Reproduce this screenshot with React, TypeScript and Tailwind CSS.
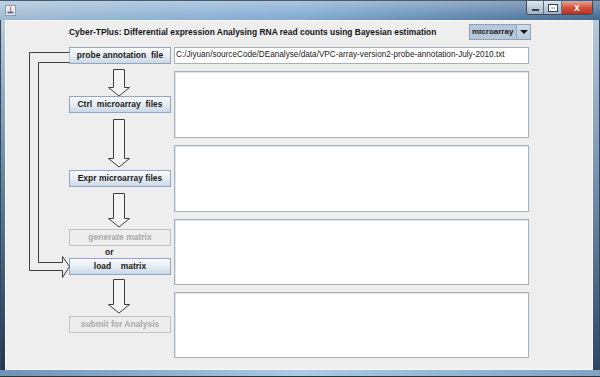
import React from "react";

const font = { fontFamily: '"Liberation Sans", Arial, sans-serif' };

// hollow down arrow between two buttons
const DownArrow = ({ h, start, tip }: { h: number; start: number; tip: number }) => {
  const base = tip - 9;
  return (
    <svg width={102} height={h} className="block">
      <polygon
        points={`44.5,${start + 0.5} 55.5,${start + 0.5} 55.5,${base + 0.5} 60.5,${base + 0.5} 50,${tip} 39.5,${base + 0.5} 44.5,${base + 0.5}`}
        fill="#f4f4f4"
        stroke="#3e3e3e"
        strokeWidth={1}
      />
    </svg>
  );
};

const Btn = ({ label, disabled }: { label: string; disabled?: boolean }) => (
  <div
    className={
      disabled
        ? "h-[17px] w-[102px] border border-[#c2c2c2] bg-[#ededed] flex items-center justify-center text-[8.5px] font-bold text-[#a9a9a9] whitespace-pre"
        : "h-[17px] w-[102px] border border-[#94a6bc] bg-gradient-to-b from-[#f7f9fb] via-[#e6edf4] to-[#c9d8e8] flex items-center justify-center text-[8.5px] font-bold text-[#1a1a1a] whitespace-pre shadow-[inset_0_1px_0_#ffffff]"
    }
  >
    {label}
  </div>
);

const Area = ({ h }: { h: number }) => (
  <div
    className="w-[355px] border border-[#a8b1bb] bg-white shadow-[inset_1px_1px_0_#e2e6ea]"
    style={{ height: h }}
  />
);

export default function App() {
  return (
    <div className="w-[600px] h-[377px] overflow-hidden bg-[#2c4866] flex flex-col" style={font}>
      {/* title bar */}
      <div className="h-[20px] relative bg-gradient-to-r from-[#9fbad3] via-[#7ea9d2] to-[#3f6890] border-t border-[#4a5b6c]">
        <div className="absolute inset-0 bg-gradient-to-b from-[#ffffff55] to-transparent" />
        <svg width={11} height={11} className="absolute left-[5px] top-[4px]" viewBox="0 0 11 11">
          <rect x={0.5} y={0.5} width={10} height={10} fill="#e9eef3" stroke="#8e9aa6" />
          <path d="M5 2 C7 3 4 4 6 6" stroke="#e2681c" strokeWidth={1.2} fill="none" />
          <path d="M2.5 6.5 h6 v2 h-6 z" fill="#3d6fb0" />
        </svg>
        {/* window buttons */}
        <div className="absolute right-[7px] top-0 h-[14px] flex border border-t-0 border-[#3d4c5c] rounded-b-[3px] overflow-hidden">
          <div className="w-[17px] h-full bg-gradient-to-b from-[#dfe7ef] to-[#9fb2c6] border-r border-[#5d6f82] flex items-center justify-center">
            <div className="w-[7px] h-[2px] bg-white border border-[#33404d] mt-[4px]" />
          </div>
          <div className="w-[18px] h-full bg-gradient-to-b from-[#dfe7ef] to-[#9fb2c6] border-r border-[#5d6f82] flex items-center justify-center">
            <div className="w-[8px] h-[6px] border-2 border-white outline outline-1 outline-[#33404d]" />
          </div>
          <div className="w-[30px] h-full bg-gradient-to-b from-[#e9a395] via-[#d2533f] to-[#b9311e] flex items-center justify-center text-white text-[10px] font-bold leading-none">
            x
          </div>
        </div>
      </div>

      <div className="flex flex-1">
        <div className="w-[5px] bg-gradient-to-b from-[#b7cbde] via-[#5d7d9c] to-[#22374f] border-l border-[#3a4756]" />

        {/* content pane */}
        <div className="relative w-[588px] h-[350px] bg-[#eeeeee] border border-[#f9f9f9]">
          <div className="h-[22px] flex items-center pl-[63px]">
            <div className="w-[400px] text-[8.45px] font-bold text-[#141414]">
              Cyber-TPlus: Differential expression Analysing RNA read counts using Bayesian estimation
            </div>
            <div className="w-[62px] h-[16px] flex border border-[#8fa2b8] bg-[#b7c8da]">
              <div className="flex-1 flex items-center pl-[2px] text-[8px] font-bold text-[#1a1a1a]">microarray</div>
              <div className="w-[14px] border-l border-[#93a6bb] flex items-center justify-center bg-gradient-to-b from-[#d2dde8] to-[#b7c8da]">
                <div className="w-0 h-0 border-l-[4px] border-r-[4px] border-t-[4px] border-l-transparent border-r-transparent border-t-[#111]" />
              </div>
            </div>
          </div>

          <div className="mt-[4px] flex pl-[63px] gap-[3px]">
            {/* step column */}
            <div className="w-[102px] flex flex-col">
              <Btn label="probe annotation  file" />
              <DownArrow h={32} start={5} tip={32} />
              <Btn label="Ctrl  microarray  files" />
              <DownArrow h={57} start={6} tip={54} />
              <Btn label="Expr microarray files" />
              <DownArrow h={42} start={6} tip={40} />
              <Btn label="generate matrix" disabled />
              <div className="h-[12px] pl-[36px] text-[8.5px] font-bold text-[#1a1a1a] leading-[12px]">or</div>
              <Btn label="load    matrix" />
              <DownArrow h={41} start={4} tip={38} />
              <Btn label="submit for Analysis" disabled />
            </div>

            {/* inputs column */}
            <div className="flex flex-col gap-[7px]">
              <div className="w-[355px] h-[17px] border border-[#a8b1bb] bg-white flex items-center pl-[1px] text-[8.2px] text-[#222] whitespace-nowrap overflow-hidden">
                C:/Jiyuan/sourceCode/DEanalyse/data/VPC-array-version2-probe-annotation-July-2010.txt
              </div>
              <Area h={67} />
              <Area h={67} />
              <Area h={66} />
              <Area h={66} />
            </div>
          </div>

          {/* connector from probe annotation to load matrix */}
          <svg width={80} height={270} className="absolute left-0 top-0 pointer-events-none">
            <polyline
              points="63.5,31.5 23.5,31.5 23.5,249.5 56.5,249.5 56.5,256.5 63.5,245.5 56.5,235.5 56.5,241.5 32.5,241.5 32.5,41.5 63.5,41.5"
              fill="#eeeeee"
              stroke="#3e3e3e"
              strokeWidth={1}
            />
          </svg>
        </div>

        <div className="w-[7px] bg-gradient-to-b from-[#b7cbde] via-[#6d8cab] to-[#2c4866] border-r border-[#3a4756]" />
      </div>

      <div className="h-[7px] bg-gradient-to-r from-[#6f93b8] via-[#a9cbe8] to-[#7ea3c6] border-b border-[#2a3542]" />
    </div>
  );
}
